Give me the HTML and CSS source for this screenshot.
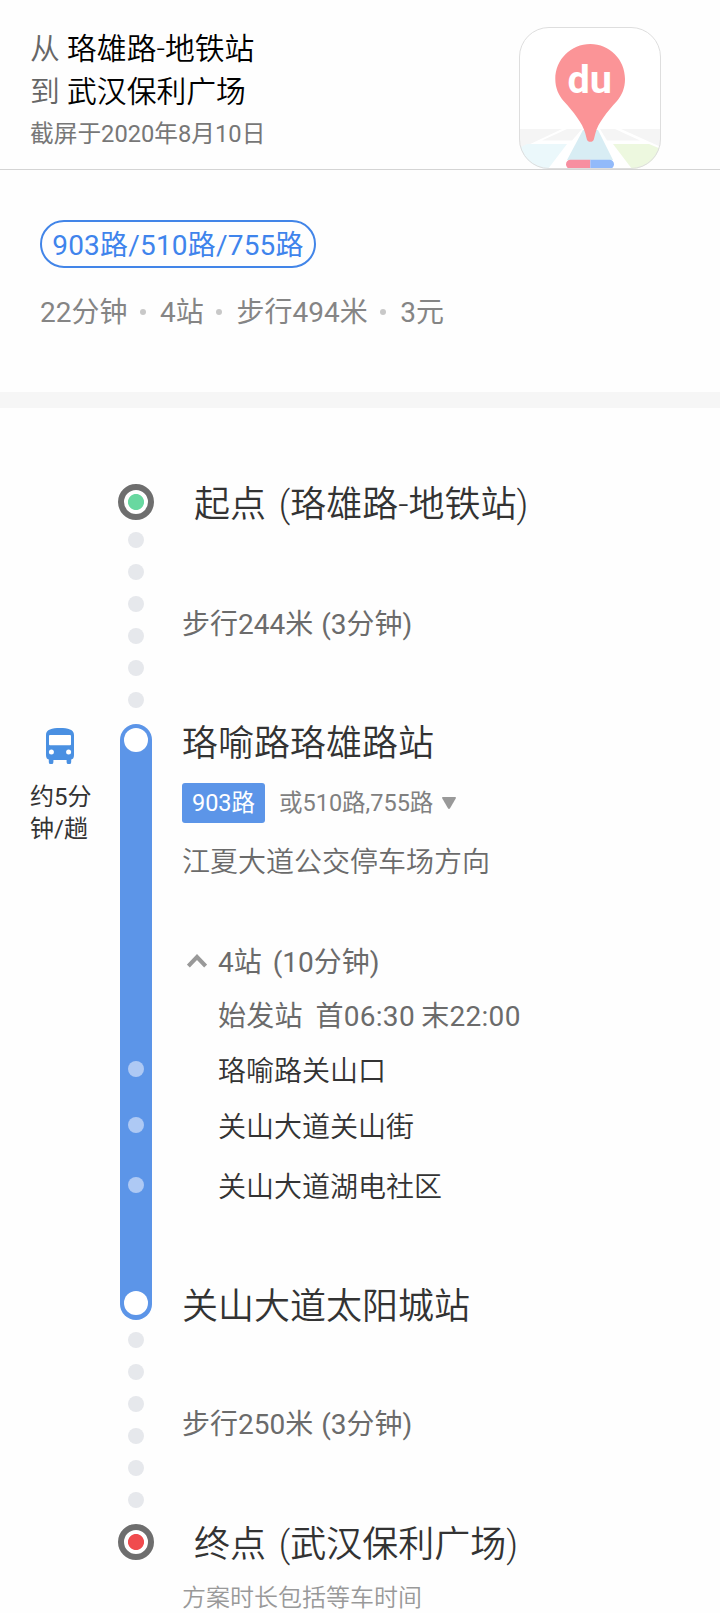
FILE: index.html
```html
<!DOCTYPE html>
<html lang="zh-CN">
<head>
    <meta charset="UTF-8">
    <meta name="viewport" content="width=device-width, initial-scale=1.0">
    <title>公交路线</title>
    <link rel="stylesheet" href="styles.css">
</head>
<body>
    <header class="header">
        <div class="trip">
            <p class="trip-line"><span class="trip-label">从</span> 珞雄路-地铁站</p>
            <p class="trip-line"><span class="trip-label">到</span> 武汉保利广场</p>
            <p class="trip-date">截屏于2020年8月10日</p>
        </div>
        <svg class="logo" viewBox="0 0 142 142">
            <defs>
                <clipPath id="logoClip"><rect x="0" y="0" width="142" height="142" rx="30"/></clipPath>
            </defs>
            <g clip-path="url(#logoClip)">
                <rect width="142" height="142" fill="#fff"/>
                <g fill="#f5f5f5">
                    <path d="M0 102H43L6 119.5L0 122Z"/>
                    <path d="M48 102H63L53 113.5H23Z"/>
                    <path d="M81 102H96L121 113.5H88Z"/>
                    <path d="M102 102H142V120Z"/>
                </g>
                <path d="M8 117H48L29 142H0V121Z" fill="#ebf8fb"/>
                <path d="M94 117H130L142 122V142H113Z" fill="#edf8df"/>
                <path d="M64 103H79L94 133H48Z" fill="#d8edf4"/>
            </g>
            <path d="M51.5 132.8H71.3V141.8H51.5A4.5 4.5 0 0 1 51.5 132.8Z" fill="#f78fa0"/>
            <path d="M71.3 132.8H90.5A4.5 4.5 0 0 1 90.5 141.8H71.3Z" fill="#92bafa"/>
            <rect x=".5" y=".5" width="141" height="141" rx="29.5" fill="none" stroke="#dedede"/>
            <path d="M71.3 17C90.5 17 106 32.5 106 52C106 61 103 68 98 74C88 85 79 96 76.5 106L74.8 112.5C74 115.6 68.7 115.6 67.9 112.5L66.2 106C63.5 96 54.5 85 44.6 74C39.6 68 36.3 61 36.3 52C36.3 32.5 52 17 71.3 17Z" fill="#fb9497"/>
            <text class="logo-text" x="48.5" y="66" textLength="44.5" lengthAdjust="spacingAndGlyphs">du</text>
        </svg>
    </header>

    <section class="summary">
        <div class="route-name">903路/510路/755路</div>
        <div class="stats">
            <span>22分钟</span><i></i><span>4站</span><i></i><span>步行494米</span><i></i><span>3元</span>
        </div>
    </section>

    <main class="plan">
        <div class="row point">
            <div class="rail"><span class="ring ring-start"></span></div>
            <h2 class="point-title">起点 (珞雄路-地铁站)</h2>
        </div>

        <div class="row walk">
            <div class="rail dots"><i></i><i></i><i></i><i></i><i></i><i></i></div>
            <p class="text">步行244米 (3分钟)</p>
        </div>

        <div class="row ride">
            <div class="side">
                <svg class="bus" viewBox="0 0 28 36">
                    <path fill="#4a90e2" d="M0 7C0 1.5 6 0 14 0S28 1.5 28 7V27Q28 31 25.2 31.5V34A2.2 2.2 0 0 1 20.6 34V32H7.4V34A2.2 2.2 0 0 1 2.8 34V31.5Q0 31 0 27Z"/>
                    <rect fill="#fff" x="3" y="7" width="22" height="10.2" rx="1"/>
                    <circle fill="#fff" cx="5.4" cy="24" r="2.5"/>
                    <circle fill="#fff" cx="22.6" cy="24" r="2.5"/>
                </svg>
                <p class="interval">约5分<br>钟/趟</p>
            </div>
            <div class="rail bar">
                <span class="bar-end"></span>
                <div class="bar-stops"><i></i><i></i><i></i></div>
                <span class="bar-end"></span>
            </div>
            <div class="detail">
                <h2 class="station">珞喻路珞雄路站</h2>
                <div class="lines">
                    <span class="line-badge">903路</span>
                    <span class="line-other">或510路,755路</span>
                    <svg class="caret" viewBox="0 0 14 12"><path fill="#999" d="M1 0H13Q14.5 0 13.7 1.4L8.2 11Q7 12.8 5.8 11L.3 1.4Q-.5 0 1 0Z"/></svg>
                </div>
                <p class="text direction">江夏大道公交停车场方向</p>
                <div class="stops-head">
                    <svg class="chevron" viewBox="0 0 20 14"><path fill="none" stroke="#999" stroke-width="4" d="M1.4 12L10 3L18.6 12"/></svg>
                    <p class="text">4站 <span class="duration">(10分钟)</span></p>
                </div>
                <p class="text first-bus">始发站&nbsp; 首06:30 末22:00</p>
                <ul class="stops">
                    <li>珞喻路关山口</li>
                    <li>关山大道关山街</li>
                    <li>关山大道湖电社区</li>
                </ul>
                <h2 class="station">关山大道太阳城站</h2>
            </div>
        </div>

        <div class="row walk">
            <div class="rail dots"><i></i><i></i><i></i><i></i><i></i><i></i></div>
            <p class="text">步行250米 (3分钟)</p>
        </div>

        <div class="row point">
            <div class="rail"><span class="ring ring-end"></span></div>
            <h2 class="point-title">终点 (武汉保利广场)</h2>
        </div>
        <p class="note">方案时长包括等车时间</p>
    </main>
</body>
</html>
```
FILE: styles.css
```css
* {
    margin: 0;
    padding: 0;
    box-sizing: border-box;
}

body {
    font-family: Roboto, "Noto Sans CJK SC", sans-serif;
    font-weight: 400;
    background: #fefefe;
    color: #333;
    height: 1613px;
    overflow: hidden;
}

p, h2, span, div {
    white-space: nowrap;
}

/* header */
.header {
    display: flex;
    justify-content: space-between;
    align-items: flex-end;
    height: 170px;
    padding: 0 59px 0 30px;
    border-bottom: 1px solid #d4d4d4;
}

.trip {
    align-self: flex-start;
    padding-top: 27px;
}

.trip-line {
    font-size: 29.8px;
    font-weight: 350;
    line-height: 43px;
    color: #000;
}

.trip-label {
    color: #666;
}

.trip-date {
    font-size: 23.7px;
    line-height: 43px;
    color: #777;
}

.logo {
    width: 142px;
    height: 142px;
}

.logo-text {
    font-family: Roboto, sans-serif;
    font-size: 38px;
    font-weight: 700;
    fill: #fff;
}

/* summary */
.summary {
    height: 238px;
    padding: 50px 40px 0;
    border-bottom: 16px solid #f6f6f6;
}

.route-name {
    width: 276px;
    height: 48px;
    border: 2px solid #4285e8;
    border-radius: 24px;
    font-size: 28px;
    line-height: 48px;
    letter-spacing: 0.2px;
    text-align: center;
    color: #3f84ec;
}

.stats {
    display: flex;
    align-items: center;
    gap: 13.3px;
    margin-top: 24px;
    font-size: 28px;
    line-height: 42px;
    color: #858585;
}

.stats i {
    width: 6px;
    height: 6px;
    margin: -2px 0 0 -1px;
    border-radius: 50%;
    background: #c8c8c8;
}

.stats i + span {
    margin-left: 1px;
}

/* plan */
.plan {
    padding-top: 76px;
}

.row {
    display: grid;
    grid-template-columns: 118px 36px 1fr;
}

.rail {
    grid-column: 2;
}

.row > .text,
.detail {
    grid-column: 3;
    padding-left: 28px;
}

.text {
    font-size: 28px;
    line-height: 40px;
    word-spacing: 1px;
    color: #6b6b6b;
}

.point {
    height: 36px;
}

.ring {
    display: block;
    width: 36px;
    height: 36px;
    border: 6px solid #6e6e6e;
    border-radius: 50%;
}

.ring-start {
    background: radial-gradient(circle, #68d8a0 7.6px, #fff 8.4px);
}

.ring-end {
    background: radial-gradient(circle, #f04b4e 7.6px, #fff 8.4px);
}

.point-title,
.station {
    font-size: 36px;
    font-weight: 350;
    line-height: 40px;
    color: #333;
}

.point-title {
    padding: 1px 0 0 40px;
    word-spacing: 4px;
}

.walk {
    height: 204px;
    align-items: start;
}

.walk .text {
    padding-top: 85px;
}

.dots {
    display: flex;
    flex-direction: column;
    align-items: center;
    gap: 16px;
    padding-top: 12px;
}

.dots i {
    width: 16px;
    height: 16px;
    border-radius: 50%;
    background: #e6e8ec;
}

/* bus segment */
.ride {
    height: 596px;
    grid-template-rows: 596px;
}

.side {
    padding: 4px 0 0 30px;
}

.bus {
    display: block;
    width: 28px;
    height: 36px;
    margin-left: 16px;
}

.interval {
    width: 60px;
    margin-top: 17px;
    font-size: 24px;
    line-height: 32px;
    color: #333;
}

.bar {
    display: flex;
    flex-direction: column;
    align-items: center;
    width: 32px;
    margin: 0 auto;
    padding: 4px 0 5px;
    border-radius: 16px;
    background: #5c95e8;
}

.bar-end {
    width: 24px;
    height: 24px;
    border-radius: 50%;
    background: #fff;
}

.bar-stops {
    display: flex;
    flex-direction: column;
    gap: 40px;
    margin: 309px 0 auto;
}

.bar-stops i {
    width: 16px;
    height: 16px;
    border-radius: 50%;
    background: #aec9f4;
}

.bar-stops i:last-child {
    margin-top: 4px;
}

.lines {
    display: flex;
    align-items: center;
    height: 40px;
    margin: 19px 0 20px;
    font-size: 23.5px;
    line-height: 41px;
}

.line-badge {
    width: 83px;
    height: 40px;
    border-radius: 3px;
    background: #5c95e8;
    color: #fff;
    text-align: center;
}

.line-other {
    margin-left: 14px;
    color: #808080;
}

.caret {
    width: 14px;
    height: 12px;
    margin-left: 9px;
}

.direction {
    font-weight: 350;
}

.stops-head {
    display: flex;
    align-items: center;
    margin-top: 60px;
}

.chevron {
    width: 20px;
    height: 14px;
    margin: 0 11px 4px 5px;
}

.duration {
    margin-left: 3px;
}

.first-bus {
    margin: 14px 0 15px;
    padding-left: 36px;
    letter-spacing: 0.3px;
    word-spacing: -1px;
}

.stops {
    list-style: none;
    padding-left: 36px;
    font-size: 28px;
    font-weight: 350;
    line-height: 40px;
    color: #333;
}

.stops li + li {
    margin-top: 16px;
}

.stops li:last-child {
    margin: 20px 0 79px;
}

.note {
    margin-top: 18px;
    padding-left: 182px;
    font-size: 24px;
    font-weight: 350;
    line-height: 40px;
    color: #999;
}
```
